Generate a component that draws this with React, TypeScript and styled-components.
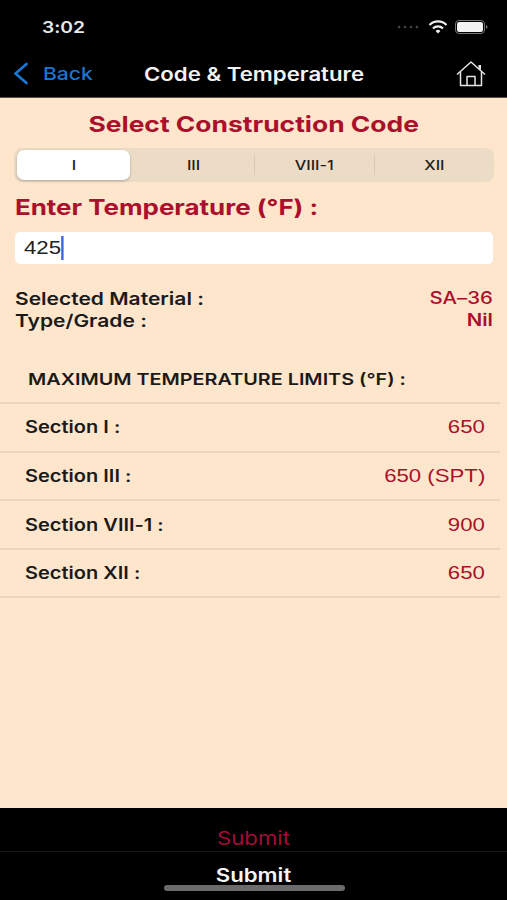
import styled, { createGlobalStyle } from "styled-components";

const GlobalStyle = createGlobalStyle`
  html, body {
    margin: 0;
    padding: 0;
    background: #000;
  }
  body {
    font-family: Inter, "Liberation Sans", sans-serif;
    font-feature-settings: "calt" 0;
  }
`;

// the capture is wider than it is tall compared to the device, so all type is stretched
const Wide = styled.span<{ $origin?: "left" | "center" | "right" }>`
  display: inline-flex;
  align-items: center;
  white-space: nowrap;
  transform: scaleX(1.2);
  transform-origin: ${(p) => p.$origin ?? "left"} center;
`;

const Screen = styled.div`
  position: relative;
  width: 507px;
  height: 900px;
  display: flex;
  flex-direction: column;
  overflow: hidden;
  background: #000;
`;

const TopBar = styled.header`
  height: 98px;
  flex: none;
  display: flex;
  flex-direction: column;
  background: #000;
  border-bottom: 1px solid #5a5046;
  box-sizing: border-box;
`;

const StatusRow = styled.div`
  height: 50px;
  padding: 4px 19px 0 42px;
  box-sizing: border-box;
  display: flex;
  align-items: center;
  justify-content: space-between;
  color: #e8e8e8;
`;

const Clock = styled.span`
  font-size: 16px;
  font-weight: 600;
`;

const StatusIcons = styled.div`
  display: flex;
  align-items: center;
  gap: 7px;
`;

const NavRow = styled.div`
  position: relative;
  flex: 1;
  display: flex;
  align-items: center;
  justify-content: space-between;
  padding: 0 21px 0 13px;
`;

const BackLink = styled.div`
  display: flex;
  align-items: center;
  gap: 14px;
  color: #1a76d2;
  font-size: 17.6px;
  font-weight: 500;
`;

const NavTitle = styled.div`
  position: absolute;
  left: 144px;
  color: #f2f2f2;
  font-size: 18.5px;
  font-weight: 600;
`;

const Body = styled.main`
  flex: 1;
  background: #fee6cc;
  display: flex;
  flex-direction: column;
`;

const Heading = styled.h1`
  margin: 13px 0 0;
  text-align: center;
  color: #ab0f2c;
  font-size: 22px;
  line-height: 26px;
  font-weight: 700;
`;

const Segments = styled.div`
  margin: 11px 13px 0 14px;
  height: 34px;
  border-radius: 8px;
  background: #ecdcc6;
  display: grid;
  grid-template-columns: repeat(4, 1fr);
`;

const Segment = styled.div<{ $active?: boolean; $divider?: boolean }>`
  display: flex;
  align-items: center;
  justify-content: center;
  font-size: 13.5px;
  font-weight: 500;
  color: #1c1c1c;
  position: relative;
  &::before {
    content: "";
    display: ${(p) => (p.$divider ? "block" : "none")};
    position: absolute;
    left: 0;
    top: 7px;
    bottom: 7px;
    width: 1px;
    background: #d8c8b2;
  }
  &::after {
    content: "";
    display: ${(p) => (p.$active ? "block" : "none")};
    position: absolute;
    inset: 2px 4px 2px 3px;
    border-radius: 7px;
    background: #fff;
    box-shadow: 0 1px 3px rgba(0, 0, 0, 0.25);
  }
  & > span {
    position: relative;
    z-index: 1;
  }
`;

const FieldLabel = styled.h2`
  margin: 10px 15px 0;
  color: #ab0f2c;
  font-size: 21.6px;
  line-height: 30px;
  font-weight: 700;
`;

const InputBox = styled.div`
  margin: 10px 14px 0 15px;
  height: 32px;
  border-radius: 5px;
  background: #fff;
  display: flex;
  align-items: center;
  padding-left: 9px;
  font-family: "Liberation Sans", Arial, sans-serif;
  font-size: 18.5px;
  color: #222;
`;

const Caret = styled.span`
  width: 2px;
  height: 24px;
  background: #3f68d8;
`;

const InfoGrid = styled.div`
  margin: 24px 14px 0 15px;
  display: grid;
  grid-template-columns: 1fr auto;
  font-size: 17.5px;
  line-height: 21.5px;
`;

const InfoLabel = styled.div`
  font-weight: 600;
  color: #1a1a1a;
`;

const InfoValue = styled.div<{ $strong?: boolean }>`
  text-align: right;
  font-size: 17px;
  font-weight: ${(p) => (p.$strong ? 600 : 500)};
  color: #ab0f2c;
`;

const LimitsTitle = styled.div`
  margin: 37px 0 0 28px;
  height: 34px;
  font-size: 16.5px;
  line-height: 22px;
  font-weight: 600;
  color: #1a1a1a;
`;

const Row = styled.div`
  margin-right: 7px;
  height: 48.7px;
  box-sizing: border-box;
  border-top: 2px solid #ecd5bd;
  display: flex;
  align-items: center;
  justify-content: space-between;
  padding: 0 15px 0 25px;
  &:last-child {
    height: 50px;
    border-bottom: 2px solid #ecd5bd;
  }
`;

const RowLabel = styled.span`
  font-size: 16.7px;
  font-weight: 600;
  color: #1a1a1a;
`;

const RowValue = styled.span`
  font-family: "Liberation Sans", Arial, sans-serif;
  font-size: 18.5px;
  color: #ab0f2c;
`;

const Footer = styled.footer`
  height: 92px;
  flex: none;
  background: #000;
  display: flex;
  flex-direction: column;
`;

const FooterButton = styled.div<{ $light?: boolean }>`
  height: ${(p) => (p.$light ? "48px" : "43px")};
  flex: none;
  display: flex;
  align-items: ${(p) => (p.$light ? "flex-start" : "flex-end")};
  justify-content: center;
  padding: ${(p) => (p.$light ? "12px 0 0" : "0 0 2px")};
  box-sizing: border-box;
  font-size: 18.5px;
  font-weight: ${(p) => (p.$light ? 600 : 400)};
  color: ${(p) => (p.$light ? "#f5f5f5" : "#a30d38")};
  border-top: ${(p) => (p.$light ? "1px solid #161616" : "none")};
`;

const HomeBar = styled.div`
  position: absolute;
  left: 164px;
  bottom: 9px;
  width: 181px;
  height: 6px;
  border-radius: 3px;
  background: #6b6b6b;
`;

const limits = [
  { label: "Section I :", value: "650" },
  { label: "Section III :", value: "650 (SPT)" },
  { label: "Section VIII-1 :", value: "900" },
  { label: "Section XII :", value: "650" },
];

export default function App() {
  return (
    <Screen>
      <GlobalStyle />
      <TopBar>
        <StatusRow>
          <Clock>
            <Wide>3:02</Wide>
          </Clock>
          <StatusIcons>
            <svg width="24" height="6" viewBox="0 0 24 6">
              {[2, 8, 14, 20].map((x) => (
                <circle key={x} cx={x} cy="3" r="1.3" fill="#444" />
              ))}
            </svg>
            <svg width="20" height="14" viewBox="0 0 20 14" fill="none" stroke="#eee" strokeWidth="2.2">
              <path d="M1.5 5a12 12 0 0 1 17 0" />
              <path d="M5 8.5a7 7 0 0 1 10 0" />
              <path d="M10 13.5l-2.4-2.6a3.4 3.4 0 0 1 4.8 0z" fill="#eee" stroke="none" />
            </svg>
            <svg width="33" height="14" viewBox="0 0 33 14">
              <rect x="0.5" y="0.5" width="29" height="13" rx="3.5" fill="none" stroke="#777" />
              <rect x="2" y="2" width="26" height="10" rx="2.2" fill="#f2f2f2" />
              <path d="M31 5v4a2 2 0 0 0 1.5-2 2 2 0 0 0-1.5-2z" fill="#777" />
            </svg>
          </StatusIcons>
        </StatusRow>
        <NavRow>
          <BackLink>
            <svg width="16" height="23" viewBox="0 0 16 23" fill="none" stroke="#1a76d2" strokeWidth="2.8" strokeLinecap="round" strokeLinejoin="round">
              <path d="M13.5 2L2.5 11.5L13.5 21" />
            </svg>
            <Wide>Back</Wide>
          </BackLink>
          <NavTitle>
            <Wide>Code &amp; Temperature</Wide>
          </NavTitle>
          <svg width="30" height="26" viewBox="0 0 30 26" fill="none" stroke="#e6e6e6" strokeWidth="1.5" strokeLinejoin="round">
            <path d="M1 13.5L15 1l14 12.5" />
            <path d="M4.5 11v13.5h21V11" />
            <path d="M11 24.5v-9h8v9" />
            <path d="M22.5 4v3l2.5 2.2V4z" fill="#e6e6e6" stroke="none" />
          </svg>
        </NavRow>
      </TopBar>
      <Body>
        <Heading>
          <Wide $origin="center">Select Construction Code</Wide>
        </Heading>
        <Segments>
          <Segment $active>
            <Wide $origin="center">I</Wide>
          </Segment>
          <Segment>
            <Wide $origin="center">III</Wide>
          </Segment>
          <Segment $divider>
            <Wide $origin="center">VIII-1</Wide>
          </Segment>
          <Segment $divider>
            <Wide $origin="center">XII</Wide>
          </Segment>
        </Segments>
        <FieldLabel>
          <Wide>Enter Temperature (°F) :</Wide>
        </FieldLabel>
        <InputBox>
          <Wide>
            425
            <Caret />
          </Wide>
        </InputBox>
        <InfoGrid>
          <InfoLabel>
            <Wide>Selected Material :</Wide>
          </InfoLabel>
          <InfoValue>
            <Wide $origin="right">SA–36</Wide>
          </InfoValue>
          <InfoLabel>
            <Wide>Type/Grade :</Wide>
          </InfoLabel>
          <InfoValue $strong>
            <Wide $origin="right">Nil</Wide>
          </InfoValue>
        </InfoGrid>
        <LimitsTitle>
          <Wide>MAXIMUM TEMPERATURE LIMITS (°F) :</Wide>
        </LimitsTitle>
        <div>
          {limits.map((row) => (
            <Row key={row.label}>
              <RowLabel>
                <Wide>{row.label}</Wide>
              </RowLabel>
              <RowValue>
                <Wide $origin="right">{row.value}</Wide>
              </RowValue>
            </Row>
          ))}
        </div>
      </Body>
      <Footer>
        <FooterButton>
          <Wide $origin="center">Submit</Wide>
        </FooterButton>
        <FooterButton $light>
          <Wide $origin="center">Submit</Wide>
        </FooterButton>
      </Footer>
      <HomeBar />
    </Screen>
  );
}
